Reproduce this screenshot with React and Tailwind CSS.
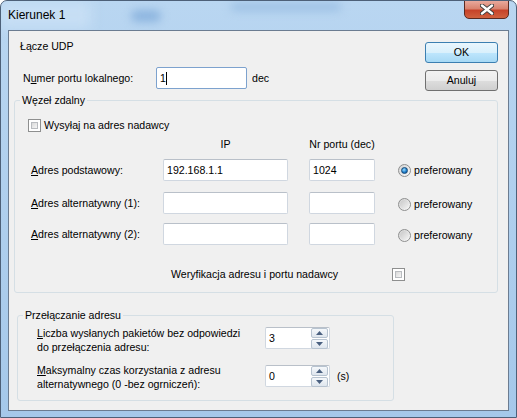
import { useState } from 'react';

// Win7 style edit box
function TextBox({ width, value = '', caret = false, focused = false, spin = false }) {
  return (
    <div
      className={`relative flex items-center h-[22px] pl-[3px] rounded-[2px] bg-white border ${
        focused ? 'border-[#7da2ce]' : 'border-[#d0d7e0] border-t-[#b9c0c9]'
      }`}
      style={{ width }}
    >
      <span className="leading-[13px]">{value}</span>
      {caret && <span className="w-px h-[13px] bg-black" />}
      {spin && (
        <div className="ml-auto mr-px flex flex-col gap-px">
          <SpinButton up />
          <SpinButton />
        </div>
      )}
    </div>
  );
}

function SpinButton({ up = false }) {
  return (
    <div className="w-[17px] h-[10px] flex items-center justify-center border border-[#b7c3d0] rounded-[2px] bg-gradient-to-b from-[#f5f8fb] to-[#dfe6ee]">
      <svg width="7" height="4" viewBox="0 0 7 4">
        {up ? <path d="M0 4 L3.5 0 L7 4 Z" fill="#4a6080" /> : <path d="M0 0 L3.5 4 L7 0 Z" fill="#4a6080" />}
      </svg>
    </div>
  );
}

function CheckBox() {
  return (
    <span className="w-[13px] h-[13px] shrink-0 border border-[#8e8f8f] bg-white p-[2px]">
      <span className="block w-full h-full border border-[#b9bcc0] bg-gradient-to-br from-[#d9d9d9] to-[#f6f6f6]" />
    </span>
  );
}

function Radio({ checked }) {
  return (
    <span className="w-[13px] h-[13px] shrink-0 rounded-full border border-[#8e8f8f] bg-gradient-to-br from-[#d4d4d4] to-[#fafafa] flex items-center justify-center">
      {checked ? (
        <span className="w-[7px] h-[7px] rounded-full border border-[#174a78] bg-[radial-gradient(circle_at_40%_35%,#9fe0ff,#1f7fcc_55%,#0a4886)]" />
      ) : (
        <span className="w-[9px] h-[9px] rounded-full bg-gradient-to-br from-[#c8c8c8] to-[#f4f4f4]" />
      )}
    </span>
  );
}

function Button({ label, primary = false }) {
  return (
    <div
      className={`w-[73px] h-[21px] flex items-center justify-center rounded-[3px] border ${
        primary
          ? 'border-[#3c7fb1] bg-[linear-gradient(#eaf6fd_0%,#d9f0fc_50%,#bee6fd_51%,#a7d9f5_100%)]'
          : 'border-[#707070] bg-[linear-gradient(#f2f2f2_0%,#ebebeb_50%,#dddddd_51%,#cfcfcf_100%)]'
      }`}
    >
      {label}
    </div>
  );
}

const addresses = [
  { label: 'Adres podstawowy:', ip: '192.168.1.1', port: '1024', checked: true, gap: 'mt-[8px]' },
  { label: 'Adres alternatywny (1):', ip: '', port: '', checked: false, gap: 'mt-[11px]' },
  { label: 'Adres alternatywny (2):', ip: '', port: '', checked: false, gap: 'mt-[9px]' },
];

export default function App() {
  const [port] = useState('1');

  return (
    <div className="relative w-[517px] h-[418px] overflow-hidden rounded-t-[7px] border border-[#4d6078] bg-gradient-to-b from-[#b9d6f1] to-[#a5c8ea] font-['Liberation_Sans',Arial,sans-serif] text-[10.6px] text-black whitespace-nowrap">
      {/* blurred glass behind the caption */}
      <div className="absolute left-[130px] top-[9px] w-[30px] h-[12px] rounded-full bg-[#8db5df] blur-[4px]" />
      <div className="absolute left-[230px] top-[2px] w-[110px] h-[8px] rounded-full bg-[#9cc0e4] blur-[4px]" />
      <div className="absolute left-0 top-0 w-[90px] h-[28px] bg-[#c6def4] blur-[6px]" />

      <div className="relative h-[29px] flex items-start justify-between">
        <span className="pl-[7px] pt-[7px] text-[12px] leading-[15px]">Kierunek 1</span>
        <div className="mr-[7px] w-[45px] h-[19px] -mt-px flex items-center justify-center rounded-b-[5px] border border-[#5a2a22] bg-[linear-gradient(#e9a99c_0%,#d9836f_45%,#c7432a_55%,#d0613f_100%)]">
          <svg width="14" height="11" viewBox="0 0 14 11">
            <path d="M2 1.5 L12 9.5 M12 1.5 L2 9.5" stroke="#3b3b3b" strokeWidth="4.2" strokeLinecap="round" />
            <path d="M2 1.5 L12 9.5 M12 1.5 L2 9.5" stroke="#ffffff" strokeWidth="2.4" strokeLinecap="round" />
          </svg>
        </div>
      </div>

      <div className="relative mx-[7px] h-[381px] border border-[#6b7c91] bg-[#f0f0f0] flex flex-col">
        {/* top: local port and dialog buttons */}
        <div className="h-[63px] flex justify-between">
          <div className="pl-[11px] pt-[9px]">
            <div className="leading-[13px]">Łącze UDP</div>
            <div className="mt-[14px] flex items-center">
              <span className="w-[136px] pl-[3px] leading-[13px]">
                N<span className="underline underline-offset-[1px]">u</span>mer portu lokalnego:
              </span>
              <TextBox width={91} value={port} caret focused />
              <span className="ml-[5px] leading-[13px]">dec</span>
            </div>
          </div>
          <div className="pr-[10px] pt-[11px] flex flex-col gap-[7px]">
            <Button label="OK" primary />
            <Button label="Anuluj" />
          </div>
        </div>

        {/* remote node */}
        <fieldset className="ml-[5px] w-[484px] h-[199px] rounded-[3px] border border-[#d5dfe5]">
          <legend className="ml-[5px] px-[2px] leading-[13px]">Węzeł zdalny</legend>

          <div className="mt-[12px] pl-[13px] flex items-center gap-[3px]">
            <CheckBox />
            <span className="leading-[13px]">Wysyłaj na adres nadawcy</span>
          </div>

          <div className="mt-[6px] pl-[148px] flex leading-[13px]">
            <span className="w-[125px] text-center">IP</span>
            <span className="ml-[21px] w-[66px] text-center">Nr portu (dec)</span>
          </div>

          {addresses.map((a) => (
            <div key={a.label} className={`${a.gap} pl-[16px] flex items-center`}>
              <span className="w-[132px] leading-[13px]">
                <span className="underline underline-offset-[1px]">A</span>
                {a.label.slice(1)}
              </span>
              <TextBox width={125} value={a.ip} />
              <div className="ml-[21px]">
                <TextBox width={66} value={a.port} />
              </div>
              <div className={`ml-[23px] flex items-center gap-[3px] ${a.checked ? '' : 'mt-[2px]'}`}>
                <Radio checked={a.checked} />
                <span className="leading-[13px]">preferowany</span>
              </div>
            </div>
          ))}

          <div className="mt-[23px] pl-[156px] flex items-center">
            <span className="w-[221px] leading-[13px]">Weryfikacja adresu i portu nadawcy</span>
            <CheckBox />
          </div>
        </fieldset>

        {/* address switching */}
        <fieldset className="mt-[16px] ml-[8px] w-[377px] h-[92px] rounded-[3px] border border-[#d5dfe5]">
          <legend className="ml-[5px] px-[2px] leading-[13px]">Przełączanie adresu</legend>

          <div className="mt-[4px] pl-[19px] flex items-start">
            <span className="w-[228px] leading-[14px]">
              <span className="underline underline-offset-[1px]">L</span>iczba wysłanych pakietów bez odpowiedzi
              <br />
              do przełączenia adresu:
            </span>
            <div className="mt-px">
              <TextBox width={65} value="3" spin />
            </div>
          </div>

          <div className="mt-[9px] pl-[19px] flex items-start">
            <span className="w-[228px] leading-[14px]">
              <span className="underline underline-offset-[1px]">M</span>aksymalny czas korzystania z adresu
              <br />
              alternatywnego (0 -bez ogrniczeń):
            </span>
            <div className="mt-[2px] flex items-center">
              <TextBox width={65} value="0" spin />
              <span className="ml-[7px] leading-[13px]">(s)</span>
            </div>
          </div>
        </fieldset>
      </div>
    </div>
  );
}
